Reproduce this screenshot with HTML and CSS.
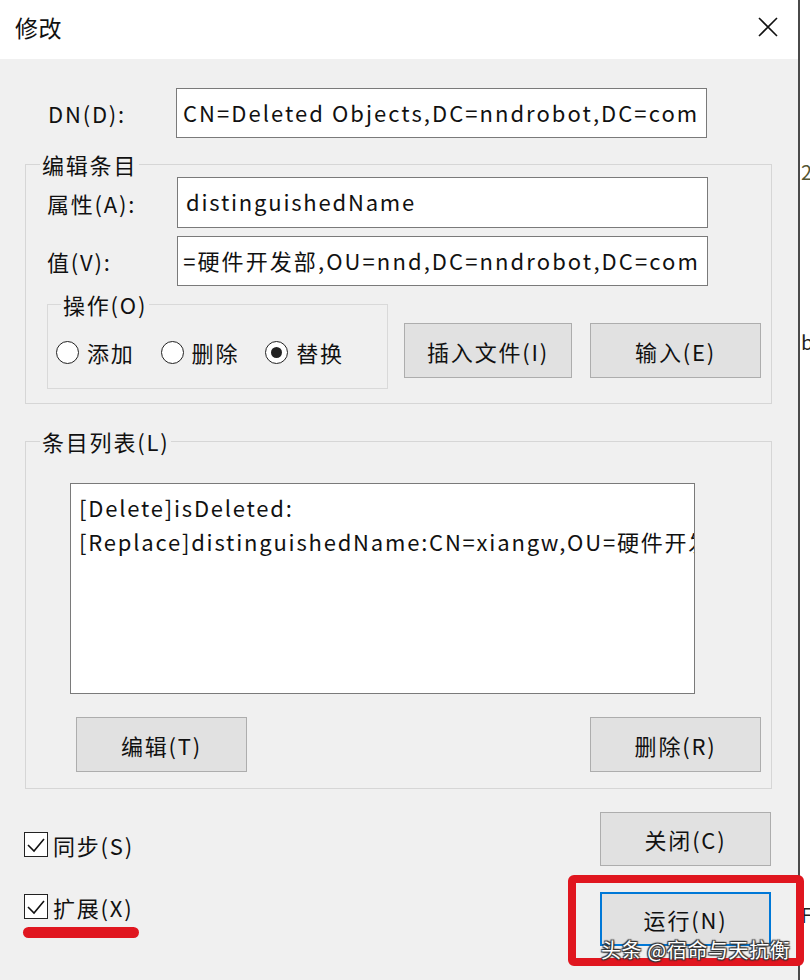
FILE: index.html
```html
<!DOCTYPE html>
<html lang="zh-CN">
<head>
<meta charset="utf-8">
<title>修改</title>
<link rel="stylesheet" href="styles.css">
</head>
<body>
<div class="page">
  <div class="dialog">
    <div class="titlebar">
      <span class="title">修改</span>
      <svg class="close" width="22" height="22" viewBox="0 0 22 22"><path d="M2 2 L20 20 M20 2 L2 20" stroke="#111" stroke-width="1.6" fill="none"/></svg>
    </div>
    <div class="content">
      <div class="row dn-row">
        <span class="label dn-label">DN(D):</span>
        <div class="textbox tb-dn">CN=Deleted Objects,DC=nndrobot,DC=com</div>
      </div>

      <fieldset class="group edit-group">
        <legend class="legend edit-legend">编辑条目</legend>
        <div class="row">
          <span class="label">属性(A):</span>
          <div class="textbox tb-attr">distinguishedName</div>
        </div>
        <div class="row row-value">
          <span class="label">值(V):</span>
          <div class="textbox tb-value"><span class="tb-text">=硬件开发部,OU=nnd,DC=nndrobot,DC=com</span></div>
        </div>
        <div class="op-row">
          <fieldset class="group op-group">
            <legend class="legend op-legend">操作(O)</legend>
            <div class="radios">
              <span class="radio"><span class="circle"></span>添加</span>
              <span class="radio"><span class="circle"></span>删除</span>
              <span class="radio"><span class="circle checked"></span>替换</span>
            </div>
          </fieldset>
          <div class="btn btn-insert">插入文件(I)</div>
          <div class="btn btn-input">输入(E)</div>
        </div>
      </fieldset>

      <fieldset class="group list-group">
        <legend class="legend list-legend">条目列表(L)</legend>
        <div class="listbox">
          <div class="item">[Delete]isDeleted:</div>
          <div class="item">[Replace]distinguishedName:CN=xiangw,OU=硬件开发部,OU=nnd,DC=nndrobot,DC=com</div>
        </div>
        <div class="list-buttons">
          <div class="btn">编辑(T)</div>
          <div class="btn">删除(R)</div>
        </div>
      </fieldset>

      <div class="bottom">
        <div class="checks">
          <div class="check"><span class="box"><svg width="22" height="22" viewBox="0 0 22 22"><path d="M3 11 L9 17 L19 5" stroke="#111" stroke-width="1.6" fill="none"/></svg></span>同步(S)</div>
          <div class="check"><span class="box"><svg width="22" height="22" viewBox="0 0 22 22"><path d="M3 11 L9 17 L19 5" stroke="#111" stroke-width="1.6" fill="none"/></svg></span>扩展(X)</div>
        </div>
        <div class="actions">
          <div class="btn">关闭(C)</div>
          <div class="btn btn-default">运行(N)</div>
        </div>
      </div>
    </div>
  </div>
  <div class="behind">
    <span class="stray s1">2</span>
    <span class="stray s2">b</span>
    <span class="stray s3">F</span>
  </div>

  <div class="mark-box"></div>
  <div class="mark-line"></div>
  <div class="watermark">头条 @宿命与天抗衡</div>
</div>
</body>
</html>
```
FILE: styles.css
```css
* { box-sizing: border-box; }
html, body { margin: 0; padding: 0; background: #fff; }
body {
  font-family: "Noto Sans CJK SC", "Noto Sans", sans-serif;
  font-size: 22px;
  letter-spacing: 1.8px;
  color: #111;
}
.page {
  position: relative;
  width: 810px;
  height: 980px;
  overflow: hidden;
  display: flex;
}
.dialog {
  flex: none;
  width: 800px;
  height: 980px;
  border-right: 2px solid #4a4a4a;
  background: #f0f0f0;
  display: flex;
  flex-direction: column;
}
.titlebar {
  height: 59px;
  background: #fff;
  display: flex;
  align-items: center;
  justify-content: space-between;
  padding: 0 19px 0 15px;
}
.title { font-size: 23px; line-height: 1; margin-top: -4px; letter-spacing: 0.5px; }
.close { margin-top: -6px; }
.content { display: flex; flex-direction: column; }

.row { display: flex; align-items: center; }
.label { width: 130px; flex: none; line-height: 1; }
.dn-row { margin-top: 29px; padding-left: 48px; }
.dn-label { width: 128px; }

.textbox {
  width: 531px;
  height: 50px;
  background: #fff;
  border: 1px solid #7a7a7a;
  padding: 0 6px;
  line-height: 46px;
  white-space: nowrap;
  overflow: hidden;
}
.tb-dn { letter-spacing: 2.05px; }
.tb-attr { height: 51px; line-height: 47px; padding-left: 8px; }
.tb-value {
  display: flex;
  justify-content: flex-end;
  padding: 0 7px 0 2px;
  letter-spacing: 2.1px;
}
.tb-text { flex: none; white-space: nowrap; }

.group {
  margin: 0;
  padding: 0;
  border: 1px solid #d6d6d6;
  min-width: 0;
}
.legend {
  padding: 0 2px;
  line-height: 26px;
  height: 26px;
}
.edit-legend { margin-left: -7px; }
.list-legend { margin-left: -30px; }
.op-legend { margin-left: 5px; }

.edit-group {
  margin: 13px 0 0 25px;
  width: 747px;
  padding: 0 0 14px 21px;
}
.row-value { margin-top: 8px; }

.op-row { display: flex; align-items: flex-start; margin-top: 5px; }
.op-group {
  width: 341px;
  padding: 22px 0 23px 8px;
  border-color: #d9d9d9;
}
.radios { display: flex; align-items: center; height: 26px; }
.radio { display: flex; align-items: center; line-height: 1; margin-right: 26px; }
.radio:last-child { margin-right: 0; }
.circle {
  width: 23px; height: 23px;
  border: 1.5px solid #222;
  border-radius: 50%;
  background: #fff;
  margin-right: 8px;
  display: flex; align-items: center; justify-content: center;
}
.circle.checked::after {
  content: "";
  width: 11px; height: 11px;
  border-radius: 50%;
  background: #222;
}

.btn {
  width: 171px;
  height: 55px;
  background: #e1e1e1;
  border: 1px solid #adadad;
  display: flex;
  align-items: center;
  justify-content: center;
  line-height: 1;
}
.btn-insert { width: 168px; margin: 32px 0 0 16px; }
.btn-input { margin: 32px 0 0 18px; }

.list-group {
  margin: 24px 0 0 25px;
  width: 747px;
  padding: 0 10px 16px 44px;
}
.listbox {
  margin-top: 29px;
  width: 625px;
  height: 211px;
  background: #fff;
  border: 1px solid #7a7a7a;
  padding: 6px 0 0 8px;
  overflow: hidden;
}
.item { line-height: 34px; white-space: nowrap; }
.list-buttons {
  margin-top: 23px;
  display: flex;
  justify-content: space-between;
  padding-left: 6px;
}

.bottom {
  display: flex;
  justify-content: space-between;
  padding: 23px 27px 0 24px;
}
.checks { display: flex; flex-direction: column; padding-top: 20px; }
.check { display: flex; align-items: center; line-height: 1; height: 25px; }
.check + .check { margin-top: 37px; }
.box {
  width: 24px; height: 25px;
  border: 1.5px solid #222;
  background: #fff;
  margin-right: 5px;
  display: flex; align-items: center; justify-content: center;
}
.actions { display: flex; flex-direction: column; gap: 26px; }
.actions .btn { height: 54px; }
.btn-default { border: 2px solid #0078d7; }

.behind {
  flex: none;
  width: 10px;
  display: flex;
  flex-direction: column;
  font-size: 20px;
  line-height: 1;
  color: #222;
  padding-left: 1px;
  letter-spacing: 0;
}
.stray { display: block; }
.s1 { margin-top: 162px; color: #553; }
.s2 { margin-top: 150px; }
.s3 { margin-top: 553px; }

.mark-box {
  position: absolute;
  left: 568px; top: 875px;
  width: 236px; height: 91px;
  border: 8px solid #e0161f;
  border-radius: 6px;
}
.mark-line {
  position: absolute;
  left: 23px; top: 927px;
  width: 116px; height: 11px;
  background: #e0161f;
  border-radius: 6px;
}
.watermark {
  position: absolute;
  left: 601px; top: 938px;
  font-size: 20px;
  line-height: 24px;
  color: #fff;
  letter-spacing: 0.6px;
  text-shadow: 0 0 2px #333, 1px 1px 1px #333, -1px -1px 1px #333, 1px -1px 1px #333, -1px 1px 1px #333;
}
```
